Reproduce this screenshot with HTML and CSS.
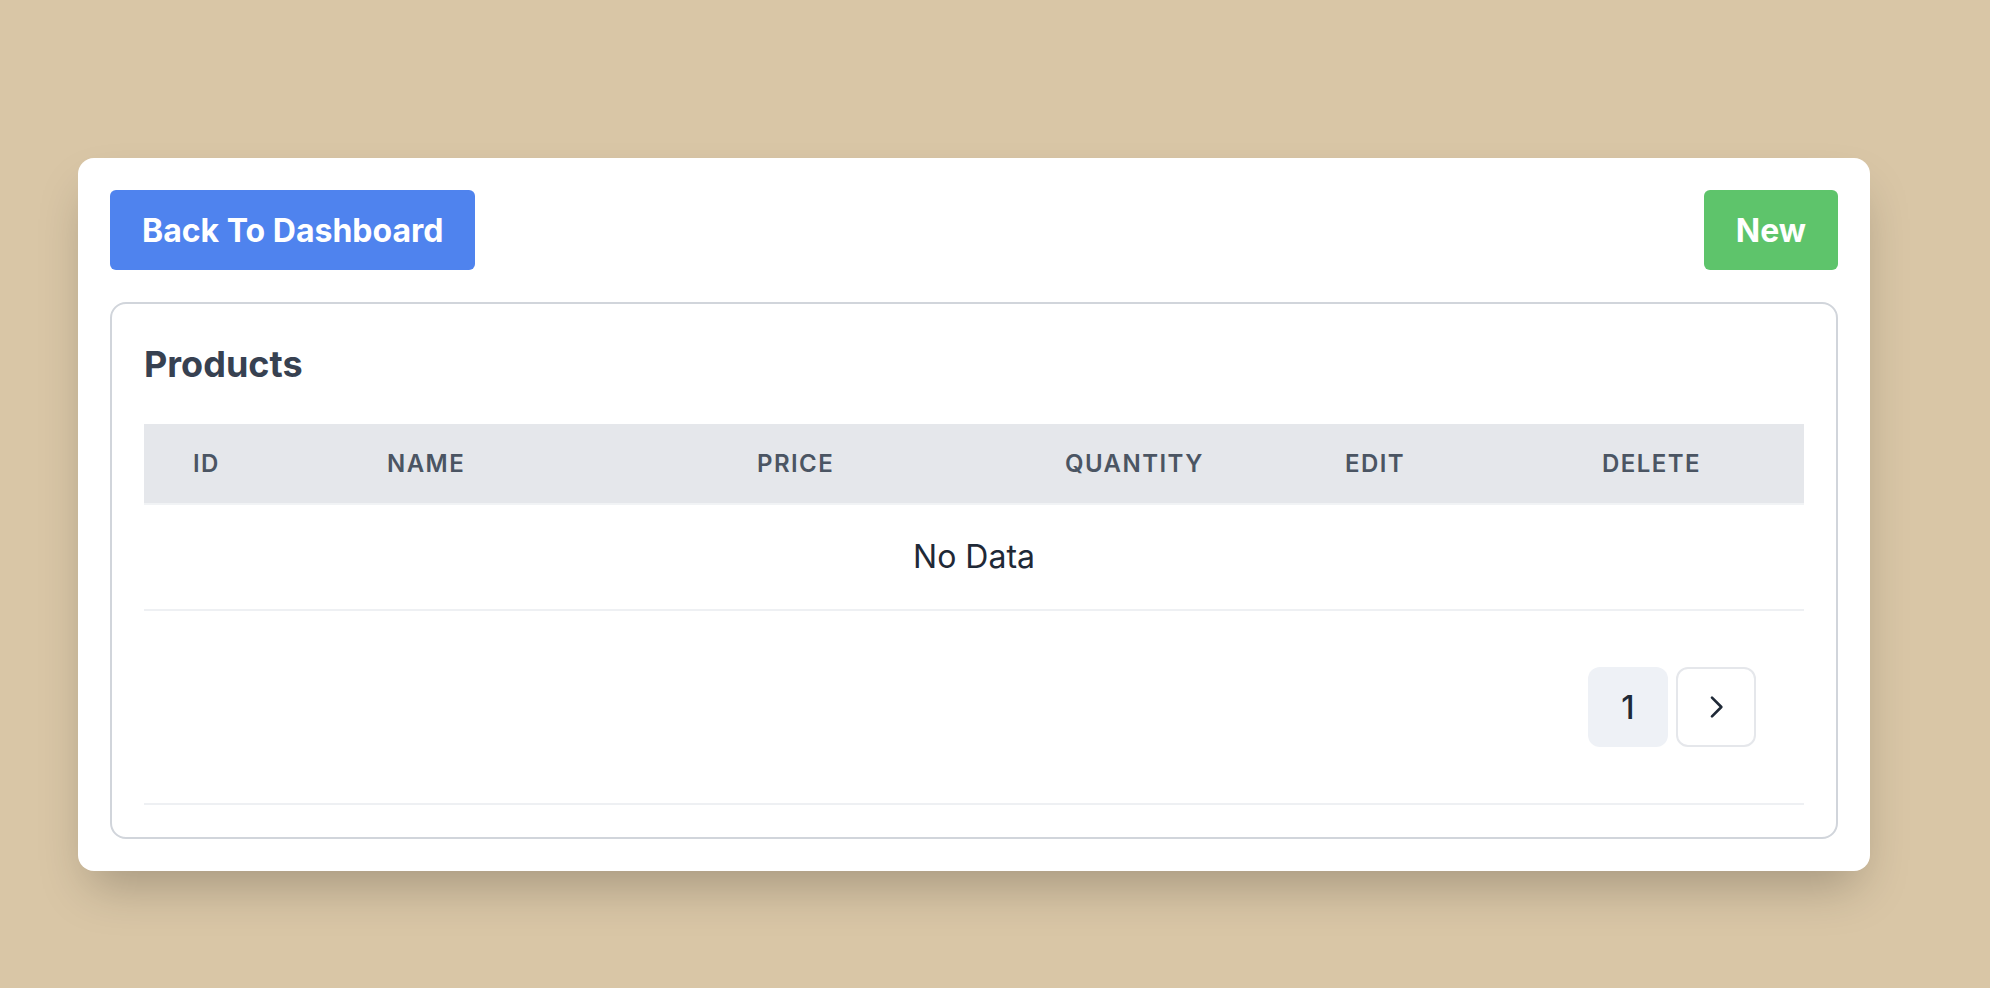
FILE: index.html
```html
<!DOCTYPE html>
<html lang="en">
<head>
<meta charset="utf-8">
<title>Products</title>
<link rel="stylesheet" href="styles.css">
</head>
<body>
<main class="card">
  <div class="toolbar">
    <button class="btn btn-blue">Back To Dashboard</button>
    <button class="btn btn-green">New</button>
  </div>
  <section class="panel">
    <h1 class="title">Products</h1>
    <table class="table">
      <colgroup>
        <col class="c-id"><col class="c-name"><col class="c-price"><col class="c-qty"><col class="c-edit"><col class="c-del">
      </colgroup>
      <thead>
        <tr>
          <th>ID</th><th>Name</th><th>Price</th><th>Quantity</th><th>Edit</th><th>Delete</th>
        </tr>
      </thead>
      <tbody>
        <tr><td colspan="6" class="empty">No Data</td></tr>
      </tbody>
    </table>
    <div class="pager">
      <button class="page page-active">1</button>
      <button class="page page-next" aria-label="Next">
        <svg viewBox="0 0 24 24" width="32" height="32" fill="none" stroke="currentColor" stroke-width="2" stroke-linecap="round" stroke-linejoin="round"><path d="M9 5l7 7-7 7"/></svg>
      </button>
    </div>
  </section>
</main>
</body>
</html>
```
FILE: styles.css
```css
* { box-sizing: border-box; }
html, body { margin: 0; }
body {
  background: #d9c6a6;
  font-family: Inter, "Noto Sans", sans-serif;
  padding: 158px 0 0 78px;
  min-height: 988px;
}
.card {
  width: 1792px;
  background: #fff;
  border-radius: 16px;
  padding: 32px;
  box-shadow: 0 25px 50px -12px rgba(0,0,0,0.25);
}
.toolbar {
  display: flex;
  justify-content: space-between;
  margin-bottom: 32px;
}
.btn {
  height: 80px;
  border: 0;
  border-radius: 6px;
  color: #fff;
  font-family: Inter, sans-serif;
  font-weight: 700;
  font-size: 32px;
  padding: 0 32px;
  cursor: pointer;
}
.btn-blue { background: #4f83ee; }
.btn-green { background: #5ec46b; }
.panel {
  border: 2px solid #d1d5db;
  border-radius: 16px;
  padding: 32px;
}
.title {
  margin: 0 0 32px;
  font-size: 36px;
  line-height: 56px;
  font-weight: 700;
  color: #374151;
}
.table {
  width: 100%;
  border-collapse: collapse;
  table-layout: fixed;
}
.c-id { width: 194px; }
.c-name { width: 370px; }
.c-price { width: 308px; }
.c-qty { width: 280px; }
.c-edit { width: 257px; }
.c-del { width: 251px; }
.table thead tr {
  background: #e5e7eb;
  border-bottom: 2px solid #f1f3f5;
}
.table th {
  height: 80px;
  padding: 0 0 0 49px;
  text-align: left;
  font-size: 24px;
  font-weight: 600;
  letter-spacing: 0.06em;
  text-transform: uppercase;
  color: #4b5563;
}
.empty {
  text-align: center;
  font-size: 32px;
  line-height: 40px;
  padding: 32px;
  color: #1f2937;
  border-bottom: 2px solid #eef0f3;
}
.pager {
  display: flex;
  justify-content: flex-end;
  gap: 8px;
  padding: 56px 48px 56px 0;
  border-bottom: 2px solid #eef0f3;
}
.page {
  width: 80px;
  height: 80px;
  border-radius: 12px;
  font-family: Inter, sans-serif;
  font-size: 32px;
  font-weight: 500;
  color: #1f2937;
  display: flex;
  align-items: center;
  justify-content: center;
  padding: 0;
}
.page-active { background: #eef1f6; border: 0; }
.page-next { background: #fff; border: 2px solid #e5e7eb; }
```
